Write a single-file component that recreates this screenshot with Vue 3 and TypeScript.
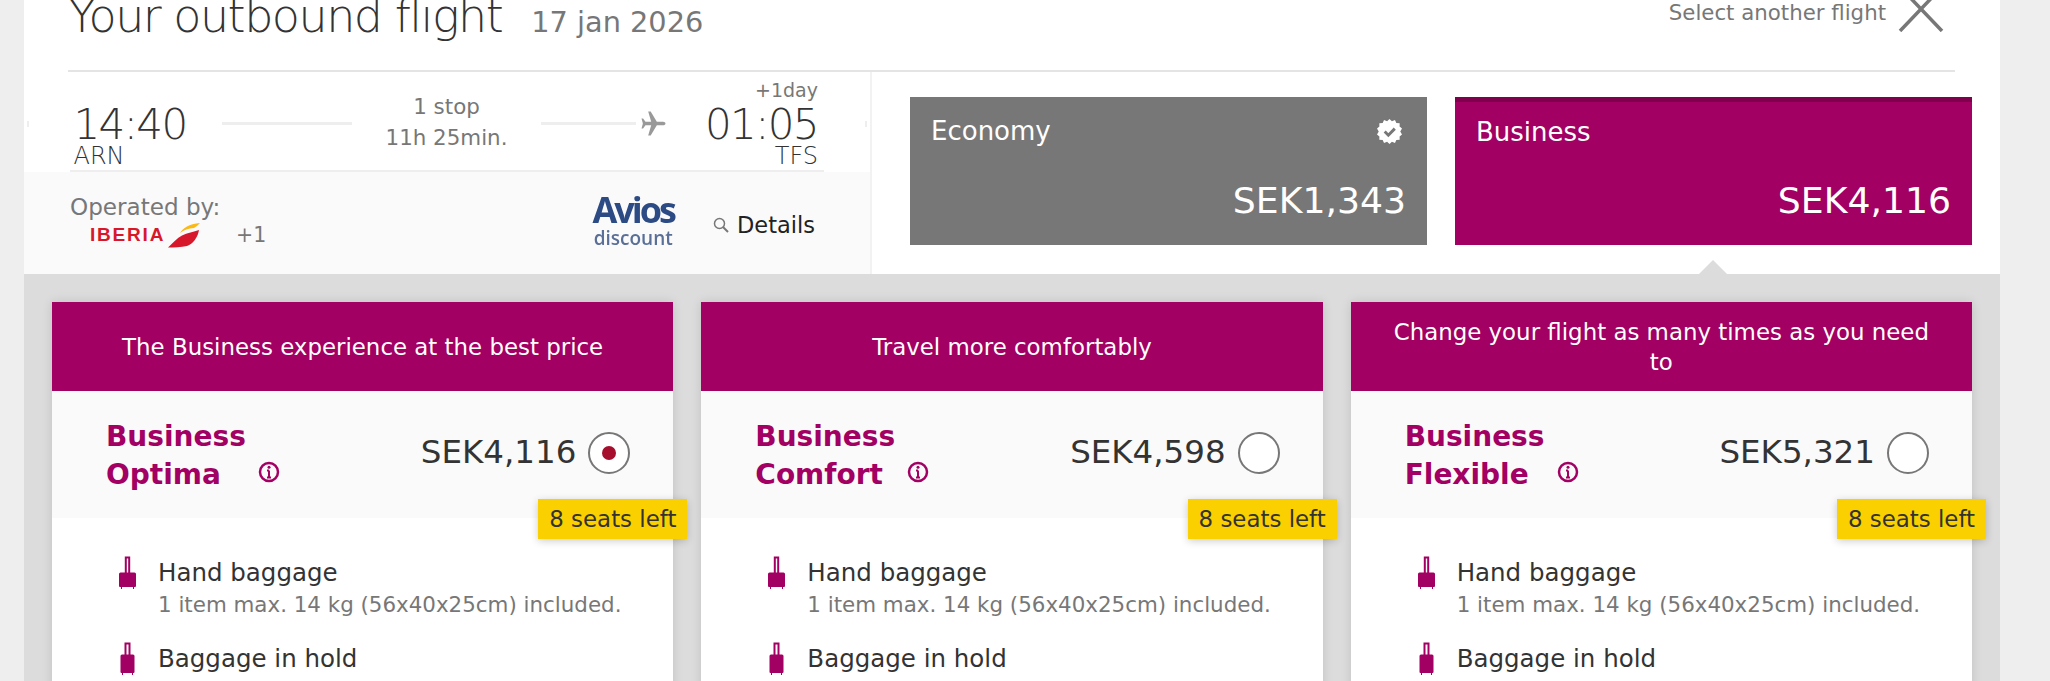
<script setup lang="ts">
interface Fare {
  tagline: string
  line1: string
  line2: string
  price: string
  selected: boolean
}

const fares: Fare[] = [
  { tagline: 'The Business experience at the best price', line1: 'Business', line2: 'Optima', price: 'SEK4,116', selected: true },
  { tagline: 'Travel more comfortably', line1: 'Business', line2: 'Comfort', price: 'SEK4,598', selected: false },
  { tagline: 'Change your flight as many times as you need to', line1: 'Business', line2: 'Flexible', price: 'SEK5,321', selected: false },
]
</script>

<template>
  <div class="page">
    <main class="panel">
      <header class="head">
        <h1 class="title">Your outbound flight</h1>
        <span class="date">17 jan 2026</span>
        <a class="another">Select another flight</a>
        <svg class="close" viewBox="0 0 46 46" width="46" height="46">
          <path d="M2 45 L44 1 M2 1 L44 45" stroke="#777" stroke-width="3.500" fill="none" />
        </svg>
      </header>

      <section class="summary">
        <div class="flight">
          <div class="times">
            <div class="point">
              <span class="sup"></span>
              <span class="time">14:40</span>
              <span class="code">ARN</span>
            </div>
            <div class="line line-a"></div>
            <div class="stops">
              <span>1 stop</span>
              <span>11h 25min.</span>
            </div>
            <div class="line line-b"></div>
            <svg class="plane" viewBox="0 0 24 24" width="25" height="25">
              <path fill="#999" d="M23.5 12c0-1-1-1.700-2.300-1.700h-6L9.300 0.500H6.900l2.900 9.800H4.300L2 7.300H0.500L1.800 12 0.500 16.700H2l2.300-3h5.500l-2.900 9.800h2.400l5.900-9.800h6c1.300 0 2.300-.7 2.300-1.700z" />
            </svg>
            <div class="point point-end">
              <span class="sup">+1day</span>
              <span class="time">01:05</span>
              <span class="code">TFS</span>
            </div>
          </div>
          <div class="operated">
            <div class="carrier">
              <span class="op-label">Operated by:</span>
              <div class="op-logo">
                <span class="iberia">IBERIA</span>
                <svg class="wing" viewBox="0 0 33 26" width="33" height="26">
                  <path fill="#d7182a" d="M1 25.500C6 21 10 16 15 13.500 20 11 27 10 32 8 31 15 26 22 20 24 14 25.500 7 25.500 1 25.500z" />
                  <path fill="#fcb813" d="M13 11C16 6 22 2 33 1 31 3 29 5 27 6 21 6.500 17 8 13 11z" />
                </svg>
                <span class="plus">+1</span>
              </div>
            </div>
            <div class="avios">
              <span class="avios-a">Avios</span>
              <span class="avios-d">discount</span>
            </div>
            <a class="details">
              <svg viewBox="0 0 16 16" width="16" height="16">
                <circle cx="6.500" cy="6.500" r="5" fill="none" stroke="#777" stroke-width="1.500" />
                <path d="M10 10l5 5" stroke="#777" stroke-width="2" />
              </svg>
              Details
            </a>
          </div>
        </div>

        <div class="cabins">
          <div class="cabin cabin-eco">
            <div class="cabin-top">
              <span>Economy</span>
              <svg class="badge-check" viewBox="0 0 26 26" width="25" height="25">
                <path fill="#fff" d="M13 0l2.500 2.400L18.700 1l1.400 3.200 3.500.2-.1 3.500L26 10l-1.800 3L26 16l-2.500 2.100.1 3.500-3.500.2L18.700 25l-3.200-1.400L13 26l-2.500-2.400L7.300 25l-1.400-3.200-3.500-.2.1-3.500L0 16l1.800-3L0 10l2.500-2.100-.1-3.500 3.500-.2L7.300 1l3.200 1.400z" />
                <path d="M8 13l3.800 3.800L18.500 10" stroke="#777" stroke-width="3" fill="none" />
              </svg>
            </div>
            <div class="cabin-price">SEK1,343</div>
          </div>
          <div class="cabin cabin-biz">
            <div class="cabin-top"><span>Business</span></div>
            <div class="cabin-price">SEK4,116</div>
            <i class="pointer"></i>
          </div>
        </div>
      </section>

      <section class="options">
        <article v-for="fare in fares" :key="fare.line2" class="card">
          <div class="tagline">{{ fare.tagline }}</div>
          <div class="fare">
            <div class="fare-name">{{ fare.line1 }}<br />{{ fare.line2 }}</div>
            <svg class="info" viewBox="0 0 22 22" width="22" height="22">
              <circle cx="11" cy="11" r="9" fill="none" stroke="#a20063" stroke-width="2.500" />
              <path d="M11 9.500v7M9 9.500h2M9 16.500h4" stroke="#a20063" stroke-width="2" fill="none" />
              <circle cx="11" cy="6.200" r="1.500" fill="#a20063" />
            </svg>
            <div class="price">{{ fare.price }}</div>
            <span class="radio"><i v-if="fare.selected"></i></span>
            <span class="seats">8 seats left</span>
          </div>
          <ul class="features">
            <li>
              <svg class="bag" viewBox="0 0 17 33" width="17" height="33">
                <path d="M6.800 17V1.500h3.400V17" fill="none" stroke="#a20063" stroke-width="2" />
                <path fill="#a20063" d="M1.500 16.500h14a1.500 1.500 0 0 1 1.500 1.500V30a1 1 0 0 1-1 1H15v2h-1v-2H3v2H2v-2H1a1 1 0 0 1-1-1V18a1.500 1.500 0 0 1 1.500-1.500z" />
              </svg>
              <div>
                <div class="f-title">Hand baggage</div>
                <div class="f-sub">1 item max. 14 kg (56x40x25cm) included.</div>
              </div>
            </li>
            <li>
              <svg class="bag" viewBox="0 0 17 33" width="17" height="33">
                <path d="M6.500 13V1.500h4V13" fill="none" stroke="#a20063" stroke-width="2" />
                <path fill="#a20063" d="M3 12.500h11a1.500 1.500 0 0 1 1.500 1.500V30a1 1 0 0 1-1 1H14v2h-1v-2H4v2H3v-2H2.500a1 1 0 0 1-1-1V14A1.500 1.500 0 0 1 3 12.500z" />
              </svg>
              <div>
                <div class="f-title">Baggage in hold</div>
              </div>
            </li>
          </ul>
        </article>
      </section>
    </main>
  </div>
</template>

<style>
html, body { margin: 0; background: #eee; }
</style>

<style scoped>
.page {
  display: flex;
  height: 681px;
  overflow: hidden;
  padding: 0 50px 0 24px;
  background: #eee;
  font-family: "DejaVu Sans", sans-serif;
  color: #333;
}
.panel { width: 1976px; background: #fff; }

.head {
  display: flex;
  align-items: baseline;
  height: 72px;
  margin: 0 45px 0 44px;
  border-bottom: 2px solid #e4e4e4;
  box-sizing: border-box;
  position: relative;
}
.title {
  margin: -12px 0 0;
  font-size: 46px;
  letter-spacing: -1.500px;
  line-height: 56px;
  font-weight: 200;
  color: #333;
}
.date { margin-left: 29px; font-size: 28.800px; color: #777; }
.another {
  align-self: flex-start;
  margin-left: auto;
  margin-right: 69px;
  font-size: 21.300px;
  line-height: 26px;
  color: #777;
}
.close { position: absolute; right: 11px; top: -14px; }

.summary { display: flex; height: 202px; }
.flight {
  position: relative;
  width: 848px;
  box-sizing: border-box;
  border-right: 2px solid #f2f2f2;
  display: flex;
  flex-direction: column;
}
.flight::before,
.flight::after {
  content: "";
  position: absolute;
  top: 49px;
  width: 2px;
  height: 6px;
  background: #eee;
}
.flight::before { left: 3px; }
.flight::after { right: 3px; }
.times {
  display: flex;
  align-items: flex-start;
  height: 100px;
  margin: 0 46px;
  padding: 0 6px 0 3.500px;
  box-sizing: border-box;
  border-bottom: 2px solid #eee;
}
.point { display: flex; flex-direction: column; width: 112px; padding-top: 8px; }
.point-end { align-items: flex-end; margin-left: auto; }
.sup { height: 20px; font-size: 19px; line-height: 20px; color: #777; }
.time { font-size: 42px; letter-spacing: -1.600px; line-height: 38px; font-weight: 200; margin-top: 6px; }
.code { font-size: 24px; line-height: 22px; font-weight: 200; margin-top: 1px; }
.line { height: 3px; background: #eee; margin-top: 50px; }
.line-a { width: 130px; margin-left: 36.500px; }
.line-b { width: 95px; }
.stops {
  width: 189px;
  display: flex;
  flex-direction: column;
  align-items: center;
  font-size: 21.400px;
  line-height: 31px;
  color: #777;
  padding-top: 19px;
}
.plane { margin: 39px 0 0 5px; }

.operated {
  flex: 1;
  display: flex;
  background: #fafafa;
  padding: 0 0 0 46px;
}
.carrier { display: flex; flex-direction: column; padding-top: 20px; }
.op-label { font-size: 23.100px; line-height: 30px; color: #777; }
.op-logo { display: flex; align-items: center; margin: 0 0 0 20px; }
.iberia {
  font-family: "Liberation Sans", sans-serif;
  font-weight: 700;
  font-size: 19px;
  letter-spacing: 1.800px;
  color: #d7182a;
  width: 78px;
}
.wing { display: block; margin-left: -1px; }
.plus { margin-left: 36px; font-size: 20.500px; color: #777; }
.avios {
  display: flex;
  flex-direction: column;
  align-items: center;
  margin-left: auto;
  margin-top: 20px;
  color: #2c4a84;
  font-family: "Open Sans", sans-serif;
  font-weight: 700;
  filter: blur(.4px);
}
.avios-a { font-size: 36px; line-height: 36px; letter-spacing: -3px; }
.avios-d { font-size: 19px; line-height: 20px; font-weight: 600; color: #5a6f98; }
.details {
  display: flex;
  align-items: center;
  gap: 8px;
  margin: 38px 55px 0 39px;
  height: 30px;
  font-size: 22.500px;
  color: #222;
}

.cabins { flex: 1; display: flex; gap: 28px; padding: 25px 28px 0 38px; }
.cabin {
  position: relative;
  flex: 1;
  height: 148px;
  box-sizing: border-box;
  color: #fff;
  padding: 18px 21px;
  display: flex;
  flex-direction: column;
}
.cabin-eco { background: #777; }
.cabin-biz { background: #a20063; border-top: 5px solid #7f004d; padding-top: 14px; }
.cabin-top { display: flex; justify-content: space-between; align-items: center; font-size: 26px; line-height: 32px; }
.badge-check { margin-right: 4px; }
.cabin-price { margin-top: auto; margin-bottom: 4px; text-align: right; font-size: 36.200px; line-height: 44px; }
.pointer {
  position: absolute;
  left: 50%;
  bottom: -29px;
  margin-left: -15px;
  border: solid transparent;
  border-width: 0 14px 14px;
  border-bottom-color: #dcdcdc;
}

.options {
  background: #dcdcdc;
  padding: 28px;
  display: grid;
  grid-template-columns: repeat(3, 1fr);
  gap: 28px;
  min-height: 407px;
}
.card { background: #fff; box-shadow: 0 0 10px rgba(0,0,0,.12); min-height: 500px; }
.tagline {
  height: 89px;
  box-sizing: border-box;
  padding: 0 32px;
  background: #a20063;
  color: #fff;
  display: flex;
  align-items: center;
  justify-content: center;
  text-align: center;
  font-size: 22.900px;
  line-height: 30px;
}
.fare {
  position: relative;
  height: 127px;
  box-sizing: border-box;
  background: #fafafa;
  padding: 27px 43px 0 54px;
  display: flex;
  align-items: flex-start;
}
.fare-name { width: 152px; font-size: 28px; line-height: 38px; font-weight: 700; color: #a20063; }
.info { margin-top: 43px; }
.price { margin-left: auto; margin-top: 13px; font-size: 32.500px; line-height: 42px; color: #333; }
.radio {
  width: 42px;
  height: 42px;
  margin: 14px 0 0 12px;
  box-sizing: border-box;
  border: 2px solid #777;
  border-radius: 50%;
  background: #fff;
  display: flex;
  align-items: center;
  justify-content: center;
  flex: none;
}
.radio i { width: 14px; height: 14px; border-radius: 50%; background: #a50e2d; }
.seats {
  position: absolute;
  right: -14px;
  top: 108px;
  height: 40px;
  width: 149px;
  background: #fbd000;
  color: #333;
  font-size: 22.900px;
  line-height: 40px;
  text-align: center;
  box-shadow: 0 2px 8px rgba(0,0,0,.2);
}
.features { list-style: none; margin: 0; padding: 38px 0 0 67px; }
.features li { display: flex; height: 86px; }
.bag { flex: none; margin-right: 22px; }
.f-title { font-size: 24.500px; line-height: 33px; color: #333; }
.f-sub { font-size: 21.400px; line-height: 30px; margin-top: 1px; color: #777; }
</style>
